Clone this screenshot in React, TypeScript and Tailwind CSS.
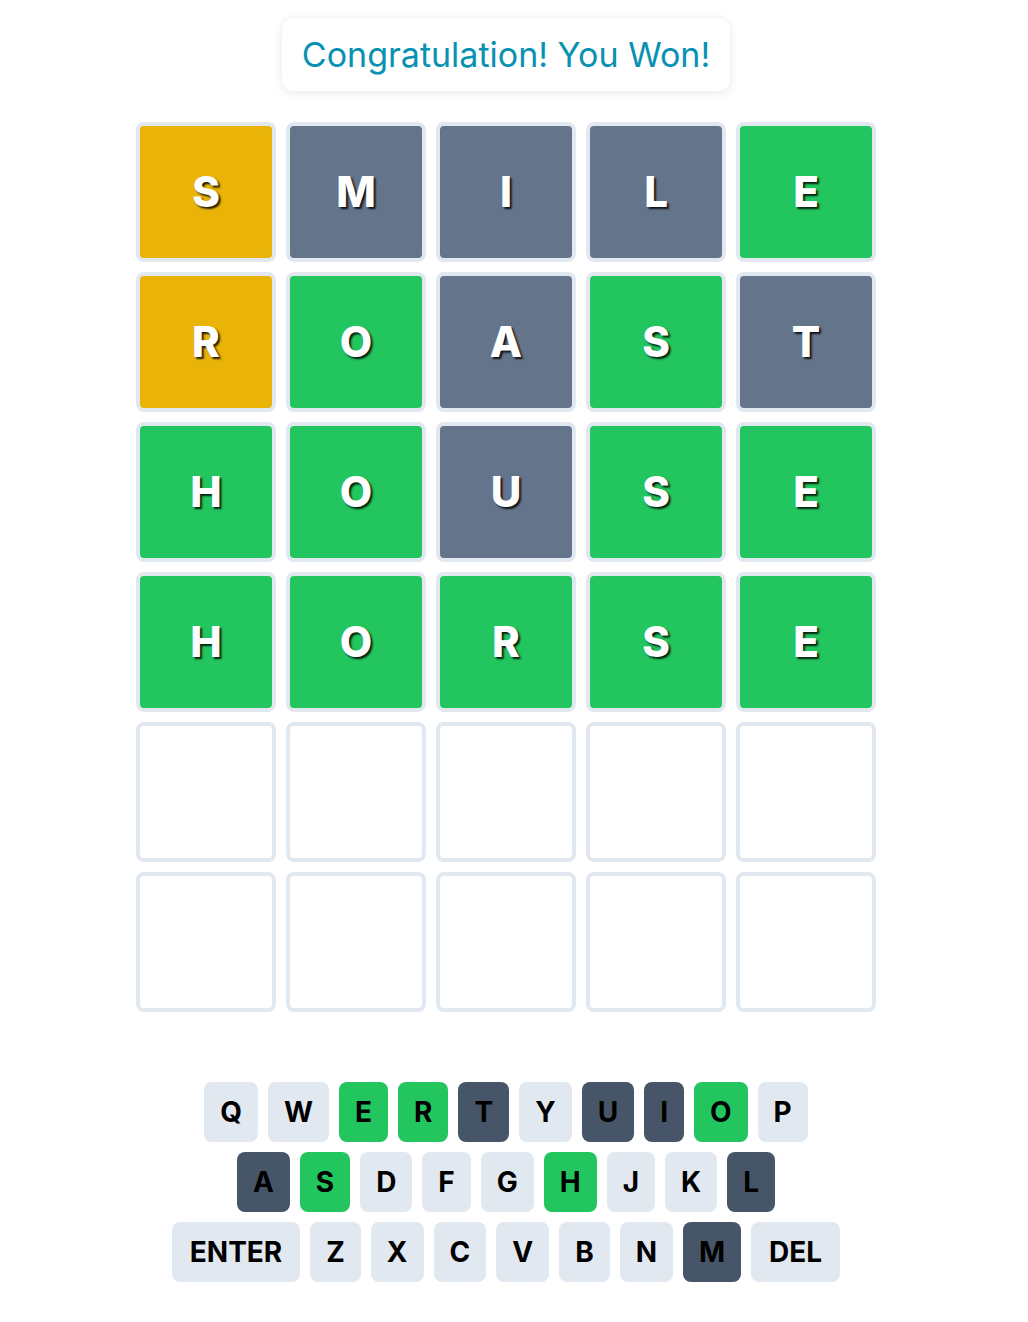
import React from "react";

type S = "y" | "g" | "x" | "e";

const board: { l: string; s: S }[][] = [
  [
    { l: "S", s: "y" },
    { l: "M", s: "x" },
    { l: "I", s: "x" },
    { l: "L", s: "x" },
    { l: "E", s: "g" },
  ],
  [
    { l: "R", s: "y" },
    { l: "O", s: "g" },
    { l: "A", s: "x" },
    { l: "S", s: "g" },
    { l: "T", s: "x" },
  ],
  [
    { l: "H", s: "g" },
    { l: "O", s: "g" },
    { l: "U", s: "x" },
    { l: "S", s: "g" },
    { l: "E", s: "g" },
  ],
  [
    { l: "H", s: "g" },
    { l: "O", s: "g" },
    { l: "R", s: "g" },
    { l: "S", s: "g" },
    { l: "E", s: "g" },
  ],
  [
    { l: "", s: "e" },
    { l: "", s: "e" },
    { l: "", s: "e" },
    { l: "", s: "e" },
    { l: "", s: "e" },
  ],
  [
    { l: "", s: "e" },
    { l: "", s: "e" },
    { l: "", s: "e" },
    { l: "", s: "e" },
    { l: "", s: "e" },
  ],
];

const tileBg: Record<S, string> = {
  y: "bg-[#eab308]",
  g: "bg-[#22c55e]",
  x: "bg-[#64748b]",
  e: "bg-white",
};

type K = "l" | "g" | "d";
const keys: [string, K][][] = [
  [
    ["Q", "l"],
    ["W", "l"],
    ["E", "g"],
    ["R", "g"],
    ["T", "d"],
    ["Y", "l"],
    ["U", "d"],
    ["I", "d"],
    ["O", "g"],
    ["P", "l"],
  ],
  [
    ["A", "d"],
    ["S", "g"],
    ["D", "l"],
    ["F", "l"],
    ["G", "l"],
    ["H", "g"],
    ["J", "l"],
    ["K", "l"],
    ["L", "d"],
  ],
  [
    ["ENTER", "l"],
    ["Z", "l"],
    ["X", "l"],
    ["C", "l"],
    ["V", "l"],
    ["B", "l"],
    ["N", "l"],
    ["M", "d"],
    ["DEL", "l"],
  ],
];

const keyBg: Record<K, string> = {
  l: "bg-[#e2e8f0]",
  g: "bg-[#22c55e]",
  d: "bg-[#475569]",
};

export default function App() {
  return (
    <div className="w-[1012px] min-h-[1322px] bg-white flex flex-col items-center font-['Inter',sans-serif]">
      <div className="mt-[17px] h-[75px] px-5 flex items-center rounded-xl bg-white shadow-[0_2px_8px_rgba(0,0,0,0.08)] border border-[#f1f5f9]">
        <span className="text-[34px] leading-none text-[#0891b2]">
          Congratulation! You Won!
        </span>
      </div>

      <div className="mt-[30px] flex flex-col gap-[10px]">
        {board.map((row, i) => (
          <div key={i} className="flex gap-[10px]">
            {row.map((t, j) => (
              <div
                key={j}
                className={`w-[140px] h-[140px] rounded-lg border-4 border-[#e2e8f0] flex items-center justify-center ${tileBg[t.s]}`}
              >
                <span className="text-[42px] leading-none font-extrabold text-white [text-shadow:2px_2px_2px_rgba(0,0,0,0.85)]">
                  {t.l}
                </span>
              </div>
            ))}
          </div>
        ))}
      </div>

      <div className="mt-[70px] flex flex-col items-center gap-[10px]">
        {keys.map((row, i) => (
          <div key={i} className="flex gap-[10px]">
            {row.map(([k, s]) => (
              <div
                key={k}
                className={`h-[60px] ${k.length > 1 ? "px-[18px]" : "px-4"} rounded-lg flex items-center justify-center text-[28px] font-bold text-black ${keyBg[s]}`}
              >
                {k}
              </div>
            ))}
          </div>
        ))}
      </div>
    </div>
  );
}
